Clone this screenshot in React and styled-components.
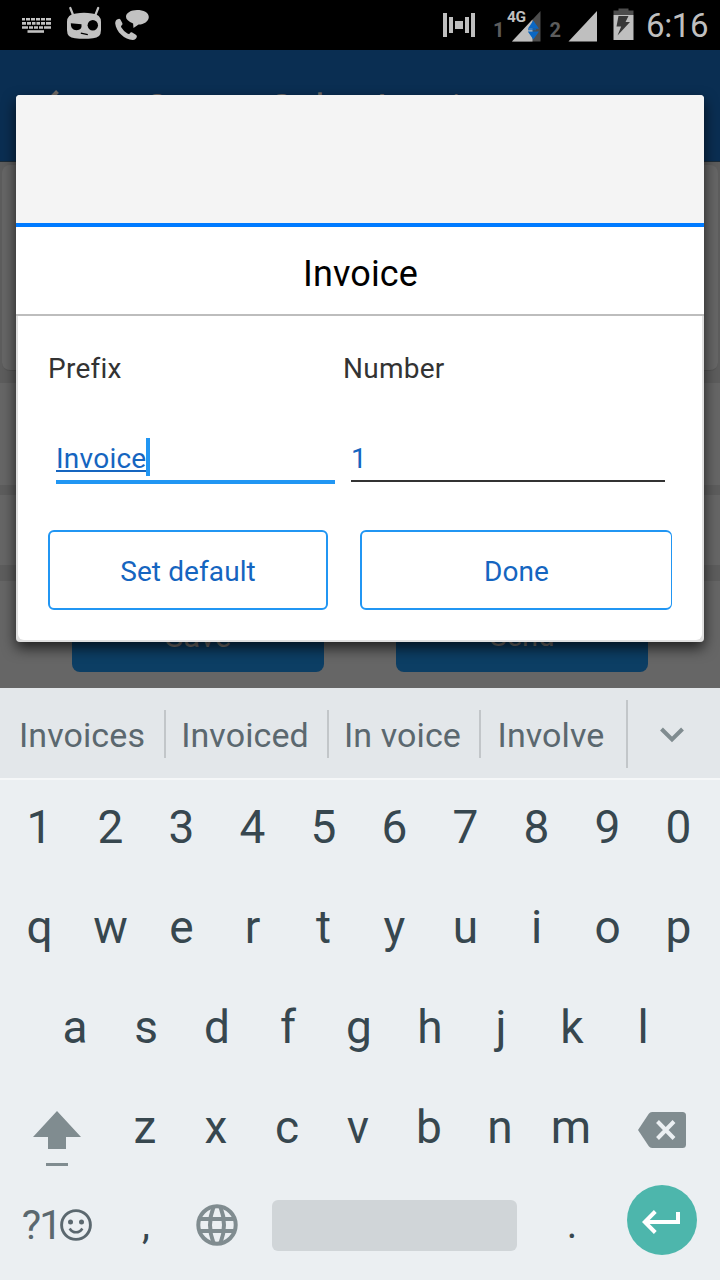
import React from "react";
import styled, { createGlobalStyle } from "styled-components";

const GlobalStyle = createGlobalStyle`
  * { box-sizing: border-box; }
  body { margin: 0; background: #000; font-family: Roboto, "Liberation Sans", sans-serif; }
  button { font-family: inherit; margin: 0; }
  svg { display: block; flex: none; }
`;

const Screen = styled.div`
  width: 720px;
  height: 1280px;
  display: flex;
  flex-direction: column;
  overflow: hidden;
`;

/* Status bar */
const StatusBar = styled.div`
  height: 50px;
  flex: none;
  background: #000;
  color: #bfbfbf;
  display: flex;
  justify-content: space-between;
`;

const Clock = styled.span`
  font-size: 33px;
  letter-spacing: -0.4px;
  line-height: 50px;
  width: 74px;
  padding-top: 1px;
`;

const StatusGroup = styled.div`
  display: flex;
`;

/* Invoice page under the dialog */
const Stage = styled.div`
  position: relative;
  height: 638px;
  flex: none;
`;

const Page = styled.div`
  height: 638px;
  background: #5d5d5d;
  display: flex;
  flex-direction: column;
`;

const AppBar = styled.div`
  height: 112px;
  background: #0a2e52;
  color: #716b66;
  display: flex;
  align-items: flex-start;
  gap: 80px;
  padding-left: 38px;
  font-size: 40px;
  line-height: 47px;
  padding-top: 36px;
  border-bottom: 1px solid #1d2c38;
`;

const Card = styled.div`
  height: 206px;
  margin: 3px 2px 12px;
  border-radius: 8px;
  background: #666;
  border-bottom: 1px solid #555;
`;

const Strip = styled.div`
  height: ${(p) => p.$height}px;
  margin-bottom: ${(p) => p.$gap}px;
  background: #666;
`;

const PageFooter = styled.div`
  flex: 1;
  background: #666;
  display: flex;
  justify-content: center;
  align-items: flex-end;
  gap: 72px;
  padding-bottom: 16px;
`;

const PageAction = styled.button`
  width: 252px;
  height: 80px;
  border: 0;
  padding: ${(p) => p.$drop}px 0 0;
  border-radius: 8px;
  background: #0c3e64;
  color: #7a7672;
  font-size: ${(p) => p.$size}px;
`;

/* Dialog */
const Dialog = styled.section`
  position: absolute;
  left: 16px;
  right: 16px;
  top: 45px;
  height: 547px;
  display: flex;
  flex-direction: column;
  background: #e0e0e0;
  border-radius: 4px;
  overflow: hidden;
`;

const DialogShade = styled.div`
  position: absolute;
  left: 16px;
  right: 16px;
  top: 45px;
  height: 547px;
  border-radius: 4px;
  box-shadow: 0 6px 14px rgba(0, 0, 0, 0.7);
`;

const DialogTop = styled.div`
  height: 132px;
  background: #f4f4f4;
  border-bottom: 4px solid #007aff;
`;

const DialogTitle = styled.h2`
  margin: 0;
  height: 89px;
  padding: 6px 0 0 1px;
  background: #fff;
  border-bottom: 2px solid #bdbdbd;
  color: #000;
  font-size: 36px;
  font-weight: 400;
  line-height: 82px;
  letter-spacing: 0.15px;
  text-align: center;
`;

const DialogBody = styled.div`
  flex: 1;
  background: #fff;
  border: 2px solid #e0e0e0;
  border-top: 0;
  border-radius: 0 0 8px 8px;
  padding: 36px 30px 30px;
  display: flex;
  flex-direction: column;
  justify-content: space-between;
`;

const Fields = styled.div`
  display: grid;
  grid-template-columns: 295px 329px;
`;

const Field = styled.label`
  display: flex;
  flex-direction: column;
  align-items: flex-start;
  color: #333;
  font-size: 28px;
  line-height: 34px;
  letter-spacing: 0.25px;
`;

const Entry = styled.div`
  width: ${(p) => p.$width}px;
  height: ${(p) => (p.$active ? 46 : 44)}px;
  margin: 52px 0 0 8px;
  color: #1565c0;
  display: flex;
  align-items: flex-start;
  line-height: 40px;
  border-bottom: ${(p) => (p.$active ? "4px solid #2196f3" : "2px solid #333")};
`;

const Composing = styled.span`
  text-decoration: underline;
  text-decoration-thickness: 2px;
  text-underline-offset: 2px;
  text-decoration-skip-ink: none;
  width: 90px;
  padding-top: 1px;
`;

const Figure = styled.span`
  padding-top: 1px;
`;

const Caret = styled.span`
  width: 4px;
  height: 38px;
  background: #2196f3;
`;

const Actions = styled.div`
  display: grid;
  grid-template-columns: 280px 312px;
  gap: 32px;
`;

const Action = styled.button`
  height: 80px;
  padding: 3px 0 0;
  background: #fff;
  border: 2px solid #2196f3;
  border-right-width: ${(p) => (p.$thinEdge ? 1 : 2)}px;
  border-radius: 6px;
  color: #1565c0;
  font-size: 28px;
  letter-spacing: 0.1px;
`;

/* Keyboard */
const Keyboard = styled.div`
  flex: 1;
  background: #ebeff2;
  display: flex;
  flex-direction: column;
`;

const Suggestions = styled.div`
  height: 92px;
  flex: none;
  background: #e3e7ea;
  border-bottom: 2px solid #f5f7f8;
  padding-top: 2px;
  display: flex;
  align-items: center;
`;

const Suggestion = styled.span`
  width: ${(p) => p.$width}px;
  height: 48px;
  padding-right: ${(p) => p.$inset ?? 0}px;
  color: #5b686f;
  font-size: 34px;
  letter-spacing: 0.1px;
  line-height: 50px;
  text-align: center;
  white-space: nowrap;
`;

const Divider = styled.span`
  width: 2px;
  height: ${(p) => p.$height}px;
  background: #c2c6c9;
`;

const MoreButton = styled.span`
  flex: 1;
  display: flex;
  justify-content: center;
  padding: 2px 4px 0 0;
`;

const Rows = styled.div`
  flex: 1;
  display: flex;
  flex-direction: column;
`;

const Row = styled.div`
  height: ${(p) => p.$height ?? 100}px;
  padding-bottom: ${(p) => p.$lift ?? 3}px;
  padding-right: ${(p) => p.$inset ?? 2}px;
  display: flex;
  align-items: center;
  justify-content: center;
`;

const Key = styled.span`
  width: ${(p) => p.$width ?? 71}px;
  flex: none;
  color: ${(p) => (p.$muted ? "#5b686f" : "#37474f")};
  font-size: ${(p) => p.$size ?? 46}px;
  letter-spacing: ${(p) => (p.$tight ? "-2px" : "normal")};
  line-height: 54px;
  padding-top: ${(p) => p.$drop ?? 0}px;
  padding-left: ${(p) => p.$indent ?? 0}px;
  display: flex;
  align-items: center;
  justify-content: center;
`;

const BottomRow = styled.div`
  height: 102px;
  display: flex;
  align-items: flex-start;
  padding-top: 7px;
`;

const BottomKey = styled(Key)`
  height: 80px;
`;

const SpaceBar = styled.span`
  width: 245px;
  height: 51px;
  margin: 15px 0 0 16px;
  border-radius: 6px;
  background: #d0d5d8;
`;

const EnterKey = styled.span`
  width: 70px;
  height: 70px;
  border-radius: 50%;
  background: #4db6ac;
  display: flex;
  align-items: center;
  justify-content: center;
  padding: 4px 2px 0 0;
`;

function NoticeIcons() {
  return (
    <svg width="160" height="50" viewBox="0 0 160 50" fill="#c2c2c2">
      <g stroke="#c2c2c2" strokeWidth="2.6" fill="none">
        <path d="M22 19.3H51" strokeDasharray="3 1 4 1 4 1 4 1 4 1 5" />
        <path d="M22 23.4H51" strokeDasharray="4 1 4 1 3.5 1 3.5 1 4 1 6" />
        <path d="M22 27.5H51" strokeDasharray="6 1 4 1 4 1 4 1 7" />
        <path d="M27.5 31.5H44" />
      </g>
      <path d="M70.300 8l3.200 8M98.200 8l-3.200 8" stroke="#c2c2c2" strokeWidth="2.2" strokeLinecap="round" />
      <path d="M76 13.4Q84 12.2 92 13.4Q101 14 101 22V30Q101 38 93 38.2Q84 39.4 75 38.2Q67 38 67 30V22Q67 14 76 13.4Z" />
      <path d="M70.8 23.2L81.5 24.2Q82.3 30 76.5 30.3Q70.4 30 70.8 23.2Z" fill="#000" />
      <circle cx="92.8" cy="25.3" r="5.2" fill="#000" />
      <path d="M80.8 33.2l7 1.4" stroke="#000" strokeWidth="1.3" />
      <path d="M133.5 27.9l-.4-4.5C128.500 21.500 126 19.500 126 16.800C126 12.800 131 10 137 10C143.500 10 148.800 12.500 148.800 17C148.800 21.500 143.500 24.700 138.600 24.600Z" />
      <path d="M118.500 18.900Q115 19.700 115.200 23.600C116 32 125 40 132.700 40Q136.200 39.700 136.900 36.500Q137 35.400 135.500 34.600L131.800 32.300Q130.600 32 129.500 33.700Q128.800 34.500 127.400 33.600Q123.500 31 121.200 27.200Q120.700 26.200 121.500 25.600Q122.900 24.500 122.400 23.300L120.400 19.600Q119.600 18.500 118.500 18.900Z" />
    </svg>
  );
}

function SignalIcons() {
  return (
    <svg width="206" height="50" viewBox="440 0 206 50" fill="#bfbfbf">
      <path d="M443 13h4v24h-4zM449 17h4v16h-4zM455 21h8v8h-8zM465 17h4v16h-4zM471 13h4v24h-4z" />
      <text x="493" y="37" fontSize="20" fontWeight="700" fill="#5c5c5c">1</text>
      <path d="M540.500 11V41.500H512Z" fill="#4d4d4d" />
      <path d="M532.500 19.500V41.500H512Z" />
      <path d="M533.300 20.500L539 28.700H527.800ZM533.300 39.500L539 31.500H527.800ZM528 29.200H536V30.200H528Z" fill="#0b67c2" />
      <text x="507" y="22" fontSize="15.500" fontWeight="700" textLength="19">4G</text>
      <text x="549.500" y="37" fontSize="20" fontWeight="700" fill="#5c5c5c">2</text>
      <path d="M597 11V41.500H568.500Z" />
      <path d="M618.500 8.500H628.500V10.500H633.500V15H613.500V10.500H618.500Z" fill="#4d4d4d" />
      <path d="M613.500 15H633.500V40H613.500Z" />
      <path d="M618.500 16L628.500 16L625.500 22H630L617.500 35.500L621.200 26.500H616.500Z" fill="#383838" />
    </svg>
  );
}

const BackIcon = () => (
  <svg width="25" height="43" viewBox="0 0 25 43">
    <path d="M19.500 5.500L4.500 20.500L19.500 35.500" fill="none" stroke="currentColor" strokeWidth="4" />
  </svg>
);

const ChevronIcon = () => (
  <svg width="26" height="18" viewBox="0 0 26 18">
    <path d="M2.500 3L13 13.500L23.500 3" fill="none" stroke="#808c90" strokeWidth="4" />
  </svg>
);

const ShiftIcon = () => (
  <svg width="48" height="56" viewBox="0 0 48 56" fill="#808c90">
    <path d="M24 0L48 26H33V38H15V26H0ZM13 52H35V55H13Z" />
  </svg>
);

const BackspaceIcon = () => (
  <svg width="48" height="36" viewBox="0 0 48 36">
    <path d="M14 0H44.500Q48 0 48 3.500V32.500Q48 36 44.500 36H14Q12 36 10.800 34.300L0 18L10.800 1.700Q12 0 14 0Z" fill="#808c90" />
    <path d="M19.500 9.500L36 26.500M36 9.500L19.500 26.500" stroke="#ebeff2" strokeWidth="4" />
  </svg>
);

const SmileyIcon = () => (
  <svg width="32" height="32" viewBox="0 0 32 32" fill="none" stroke="#5b686f">
    <circle cx="16" cy="16" r="14.400" strokeWidth="2.900" />
    <circle cx="10.500" cy="13" r="2.500" fill="#5b686f" stroke="none" />
    <circle cx="21.500" cy="13" r="2.500" fill="#5b686f" stroke="none" />
    <path d="M9.700 19.500Q12 23.300 16 23.300T22.300 19.500" strokeWidth="2.600" />
  </svg>
);

const GlobeIcon = () => (
  <svg width="42" height="42" viewBox="0 0 42 42" fill="none" stroke="#808c90" strokeWidth="4">
    <circle cx="21" cy="21" r="18.700" />
    <path d="M3 15H39M3 27H39M17.500 3Q10.500 21 17.500 39M24.500 3Q31.500 21 24.500 39" />
  </svg>
);

const EnterIcon = () => (
  <svg width="38" height="24" viewBox="0 0 38 24" fill="none" stroke="#fff" strokeWidth="4">
    <path d="M36 2V12H3M13.300 1.500L2.800 12L13.300 22.500" />
  </svg>
);

const Letters = ({ keys }) => [...keys].map((k) => <Key key={k}>{k}</Key>);

export default function App() {
  return (
    <Screen>
      <GlobalStyle />
      <StatusBar>
        <NoticeIcons />
        <StatusGroup>
          <SignalIcons />
          <Clock>6:16</Clock>
        </StatusGroup>
      </StatusBar>
      <Stage>
        <Page>
          <AppBar>
            <BackIcon />
            <span>Create Sales Invoice</span>
          </AppBar>
          <Card />
          <Strip $height={102} $gap={10} />
          <Strip $height={70} $gap={16} />
          <PageFooter>
            <PageAction $size={31} $drop={9}>Save</PageAction>
            <PageAction $size={29} $drop={7}>Send</PageAction>
          </PageFooter>
        </Page>
        <DialogShade />
        <Dialog>
          <DialogTop />
          <DialogTitle>Invoice</DialogTitle>
          <DialogBody>
            <Fields>
              <Field>
                Prefix
                <Entry $active $width={279}>
                  <Composing>Invoice</Composing>
                  <Caret />
                </Entry>
              </Field>
              <Field>
                Number
                <Entry $width={314}>
                  <Figure>1</Figure>
                </Entry>
              </Field>
            </Fields>
            <Actions>
              <Action>Set default</Action>
              <Action $thinEdge>Done</Action>
            </Actions>
          </DialogBody>
        </Dialog>
      </Stage>
      <Keyboard>
        <Suggestions>
          <Suggestion $width={164}>Invoices</Suggestion>
          <Divider $height={48} />
          <Suggestion $width={161} $inset={3}>Invoiced</Suggestion>
          <Divider $height={48} />
          <Suggestion $width={150} $inset={3}>In voice</Suggestion>
          <Divider $height={48} />
          <Suggestion $width={145} $inset={5}>Involve</Suggestion>
          <Divider $height={68} />
          <MoreButton>
            <ChevronIcon />
          </MoreButton>
        </Suggestions>
        <Rows>
          <Row $height={98} $lift={5}>
            <Letters keys="1234567890" />
          </Row>
          <Row>
            <Letters keys="qwertyuiop" />
          </Row>
          <Row>
            <Letters keys="asdfghjkl" />
          </Row>
          <Row $inset={4}>
            <Key $width={106} $drop={24}>
              <ShiftIcon />
            </Key>
            <Letters keys="zxcvbnm" />
            <Key $width={106} $drop={6} $indent={4}>
              <BackspaceIcon />
            </Key>
          </Row>
          <BottomRow>
            <BottomKey $muted $tight $size={41} $width={112} $indent={2}>
              ?1
              <SmileyIcon />
            </BottomKey>
            <BottomKey $width={66} $size={40} $indent={2}>,</BottomKey>
            <BottomKey $width={78}>
              <GlobeIcon />
            </BottomKey>
            <SpaceBar />
            <BottomKey $width={110} $size={40}>.</BottomKey>
            <EnterKey>
              <EnterIcon />
            </EnterKey>
          </BottomRow>
        </Rows>
      </Keyboard>
    </Screen>
  );
}
